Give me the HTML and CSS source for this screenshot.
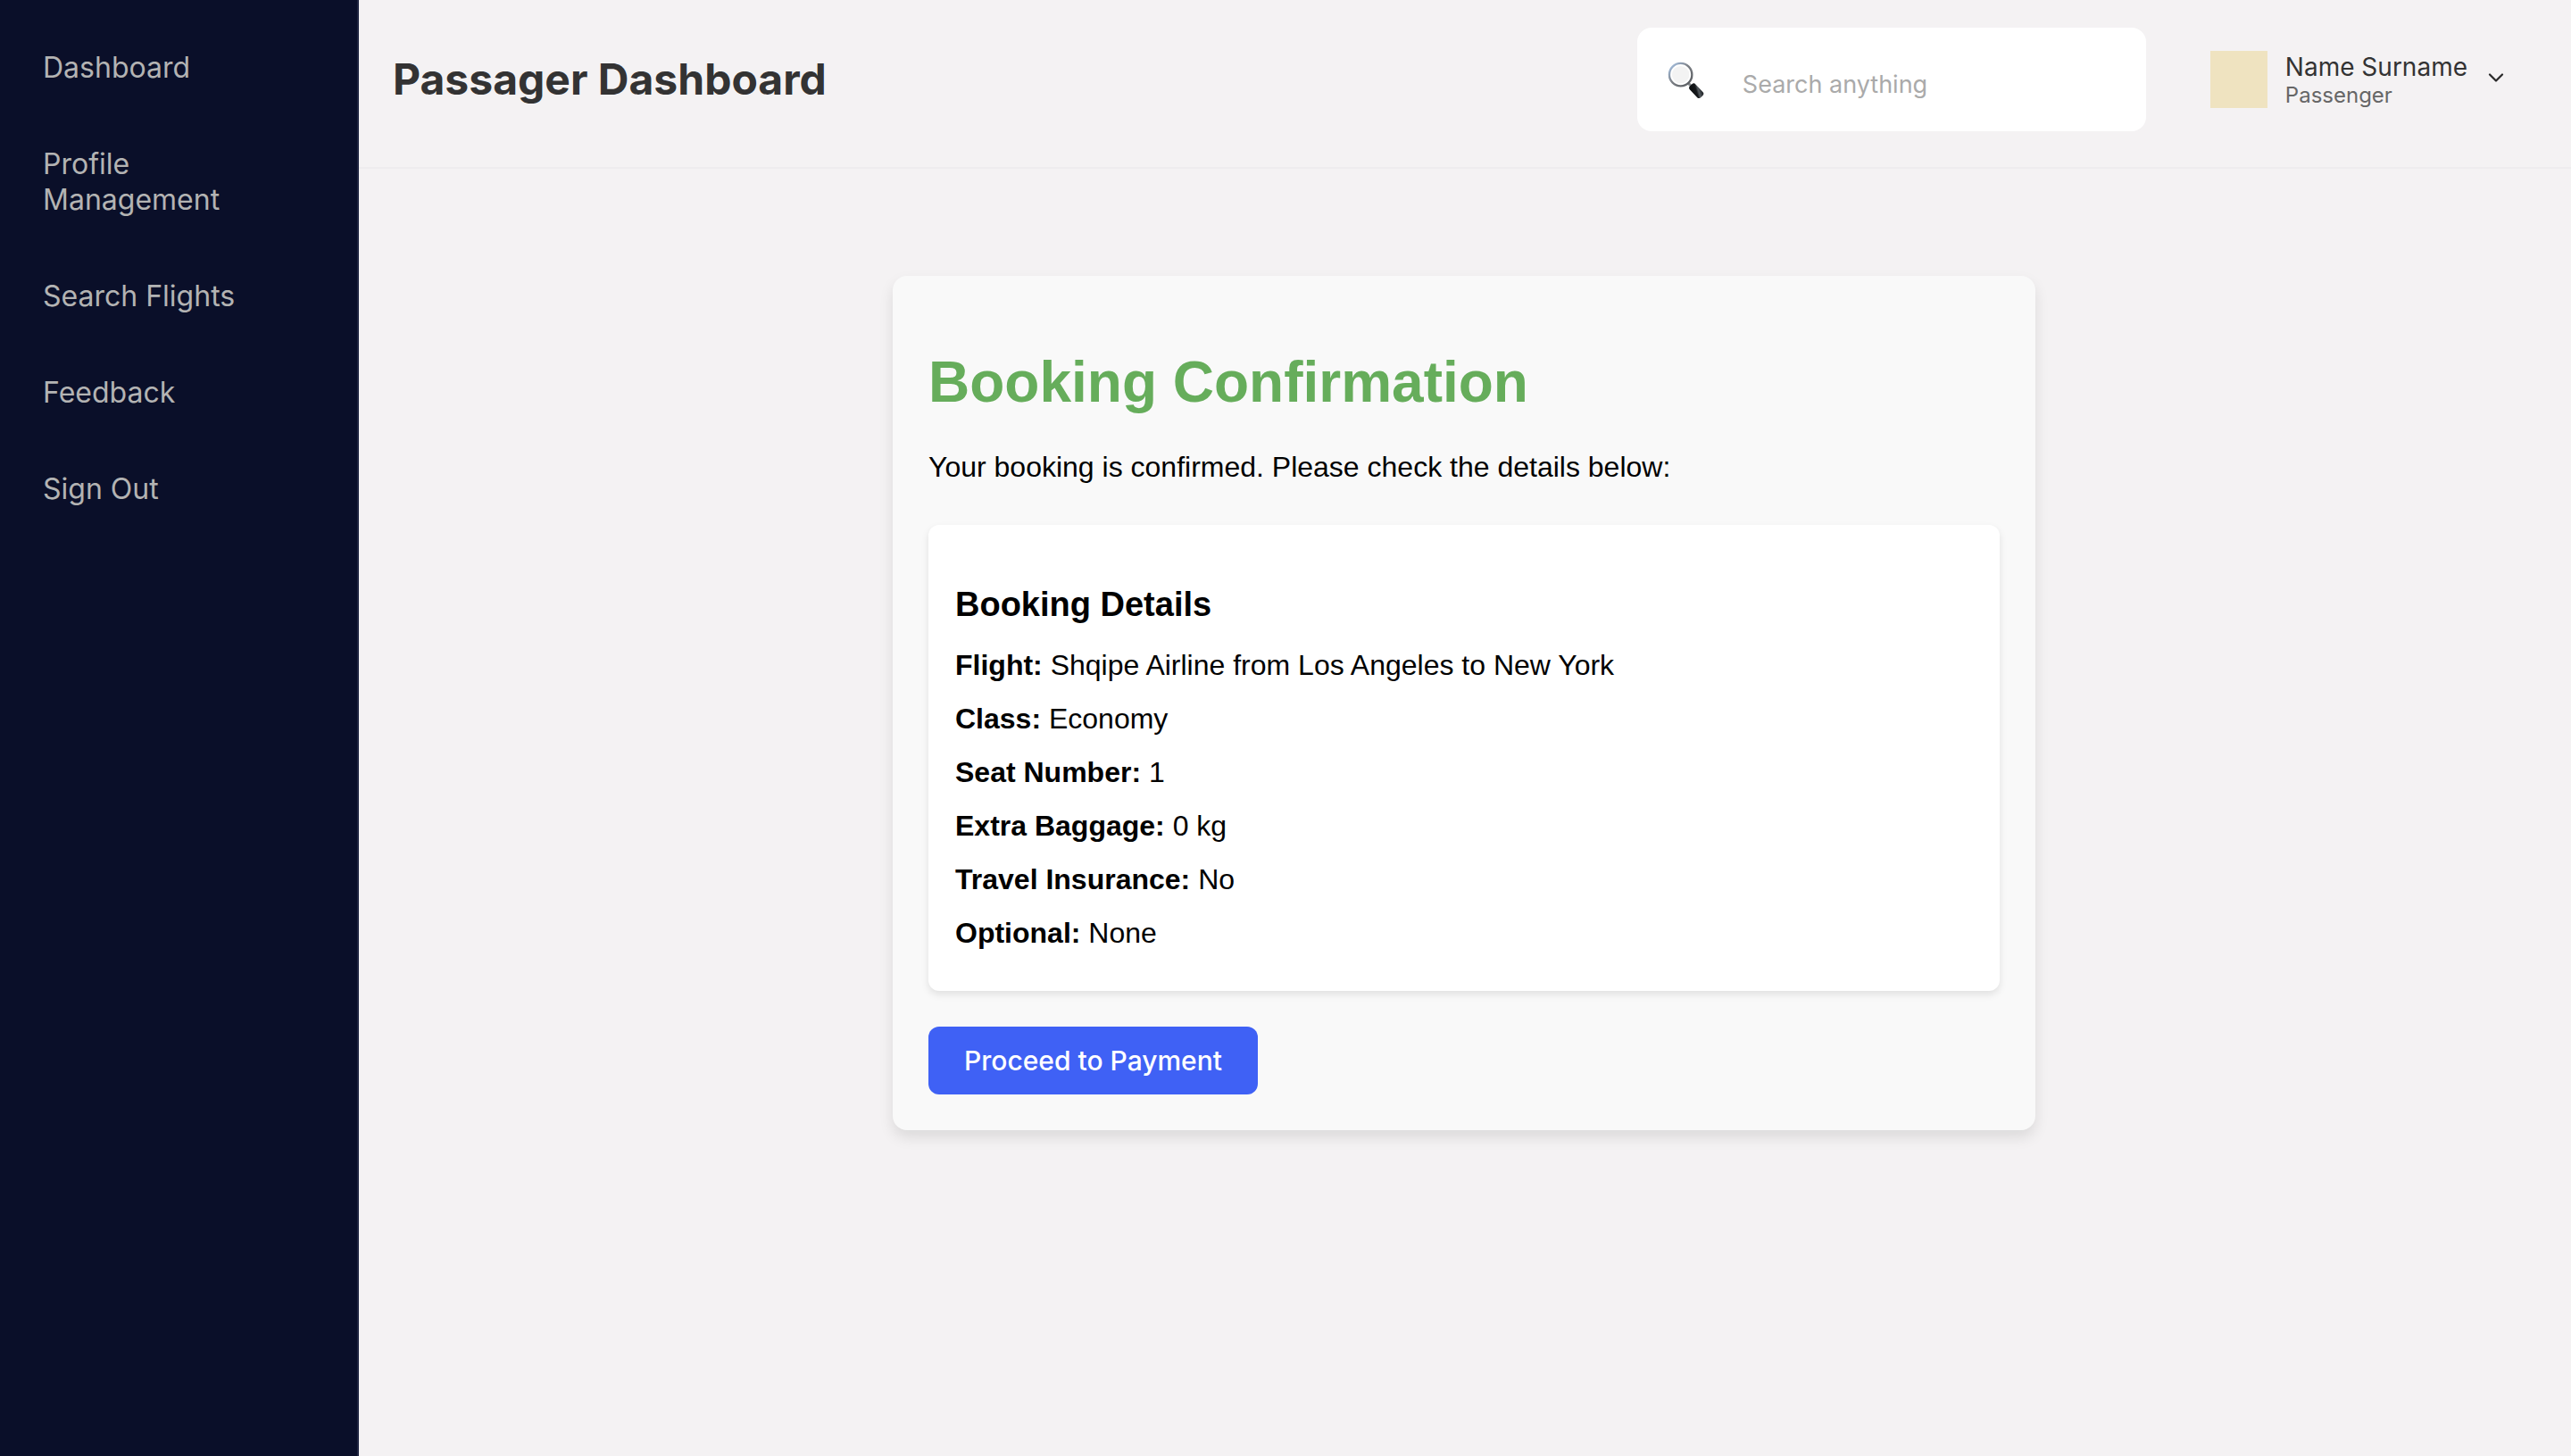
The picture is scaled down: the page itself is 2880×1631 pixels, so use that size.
FILE: index.html
```html
<!DOCTYPE html>
<html lang="en">
<head>
  <meta charset="utf-8">
  <meta name="viewport" content="width=device-width, initial-scale=1">
  <title>Passager Dashboard</title>
  <link rel="stylesheet" href="styles.css">
</head>
<body>
  <div class="layout">
    <nav class="sidebar" aria-label="Main">
      <a class="sidebar-link" href="#dashboard">Dashboard</a>
      <a class="sidebar-link" href="#profile">Profile Management</a>
      <a class="sidebar-link" href="#flights">Search Flights</a>
      <a class="sidebar-link" href="#feedback">Feedback</a>
      <a class="sidebar-link" href="#signout">Sign Out</a>
    </nav>
    <div class="page">
      <header class="topbar">
        <h1 class="topbar-title">Passager Dashboard</h1>
        <label class="search">
          <svg class="search-icon" viewBox="0 0 42 42" aria-hidden="true">
            <defs>
              <linearGradient id="rim" x1="0" y1="0" x2="1" y2="1">
                <stop offset="0" stop-color="#a9c8ee"/>
                <stop offset="0.45" stop-color="#7d8187"/>
                <stop offset="1" stop-color="#55585c"/>
              </linearGradient>
              <linearGradient id="grip" x1="0" y1="1" x2="1" y2="0">
                <stop offset="0" stop-color="#0a0c0e"/>
                <stop offset="0.5" stop-color="#15181b"/>
                <stop offset="0.65" stop-color="#555b60"/>
                <stop offset="1" stop-color="#0c0e10"/>
              </linearGradient>
            </defs>
            <path d="M24 25l4 4" stroke="#85898d" stroke-width="3"/>
            <circle cx="15" cy="15" r="13" fill="#fff" stroke="url(#rim)" stroke-width="2.4"/>
            <circle cx="15" cy="15" r="10" fill="#f3f3f3"/>
            <rect x="24" y="29" width="18" height="9" rx="3" fill="url(#grip)" transform="rotate(47 33 33.500)"/>
          </svg>
          <input class="search-input" type="search" placeholder="Search anything" aria-label="Search anything">
        </label>
        <button class="user" type="button">
          <span class="avatar"></span>
          <span class="user-text">
            <span class="user-name">Name Surname</span>
            <span class="user-role">Passenger</span>
          </span>
          <svg class="chevron" viewBox="0 0 24 24" aria-hidden="true">
            <path d="M5 6.500l7 7 7-7" fill="none" stroke="#292929" stroke-width="2.200" stroke-linecap="round" stroke-linejoin="round"/>
          </svg>
        </button>
      </header>
      <main class="content">
        <section class="confirmation">
          <h2 class="confirmation-title">Booking Confirmation</h2>
          <p class="confirmation-lead">Your booking is confirmed. Please check the details below:</p>
          <div class="details">
            <h3 class="details-title">Booking Details</h3>
            <p class="detail"><strong>Flight:</strong> Shqipe Airline from Los Angeles to New York</p>
            <p class="detail"><strong>Class:</strong> Economy</p>
            <p class="detail"><strong>Seat Number:</strong> 1</p>
            <p class="detail"><strong>Extra Baggage:</strong> 0 kg</p>
            <p class="detail"><strong>Travel Insurance:</strong> No</p>
            <p class="detail"><strong>Optional:</strong> None</p>
          </div>
          <button class="pay" type="button">Proceed to Payment</button>
        </section>
      </main>
    </div>
  </div>
</body>
</html>
```
FILE: styles.css
```css
* {
  box-sizing: border-box;
}

body {
  margin: 0;
  background: #f4f2f3;
  color: #000;
  font-family: Inter, "Liberation Sans", sans-serif;
}

.layout {
  display: flex;
  min-height: 100vh;
}

.sidebar {
  display: flex;
  flex-direction: column;
  flex: 0 0 402px;
  gap: 68px;
  padding: 56px 48px;
  border-right: 2px solid #1f2440;
  background: #0a0f29;
}

.sidebar-link {
  color: #b3b3b3;
  font-size: 32px;
  line-height: 40px;
  text-decoration: none;
}

.page {
  flex: 1;
  min-width: 0;
}

.topbar {
  display: flex;
  align-items: center;
  padding: 31px 72px 40px 38px;
  border-bottom: 2px solid #eeecee;
}

.topbar-title {
  flex: 1;
  margin: 0;
  color: #333;
  font-size: 48px;
  line-height: 56px;
}

.search {
  display: flex;
  align-items: center;
  gap: 43px;
  width: 570px;
  height: 116px;
  margin-right: 72px;
  padding: 0 34px;
  border-radius: 16px;
  background: #fff;
}

.search-icon {
  flex: none;
  width: 41px;
  height: 41px;
}

.search-input {
  flex: 1;
  min-width: 0;
  padding: 12px 0 0;
  border: 0;
  outline: 0;
  background: none;
  color: #333;
  font: 27px/36px Inter, "Liberation Sans", sans-serif;
}

.search-input::placeholder {
  color: #aaa;
}

.user {
  display: flex;
  align-items: center;
  gap: 20px;
  padding: 0;
  border: 0;
  background: none;
  font-family: inherit;
  text-align: left;
}

.avatar {
  width: 64px;
  height: 64px;
  background: #efe3c0;
}

.user-text {
  display: flex;
  flex-direction: column;
}

.user-name {
  color: #333;
  font-size: 28px;
  line-height: 36px;
}

.user-role {
  color: #666;
  font-size: 24px;
  line-height: 28px;
}

.chevron {
  width: 24px;
  height: 24px;
}

.content {
  padding: 120px 42px 120px 40px;
  font-family: "Liberation Sans", Arial, sans-serif;
  font-size: 32px;
  line-height: 36px;
}

.confirmation {
  max-width: 1280px;
  margin: 0 auto;
  padding: 40px;
  border-radius: 16px;
  background: #f9f9f9;
  box-shadow: 0 8px 16px rgba(0, 0, 0, 0.1);
}

.confirmation-title {
  margin: 42px 0 40px;
  color: #66ad5b;
  font-size: 64px;
  line-height: 74px;
}

.confirmation-lead {
  margin: 0 0 47px;
}

.details {
  margin-bottom: 40px;
  padding: 30px;
  border-radius: 12px;
  background: #fff;
  box-shadow: 0 4px 8px rgba(0, 0, 0, 0.1);
}

.details-title {
  margin: 37px 0 28px;
  font-size: 38px;
  line-height: 44px;
}

.detail {
  margin: 0 0 24px;
}

.detail:last-child {
  margin-bottom: 17px;
}

.pay {
  display: block;
  padding: 20px 40px;
  border: 0;
  border-radius: 12px;
  background: #3f61f5;
  color: #fff;
  font: 500 30px/36px Inter, "Liberation Sans", sans-serif;
}
```
